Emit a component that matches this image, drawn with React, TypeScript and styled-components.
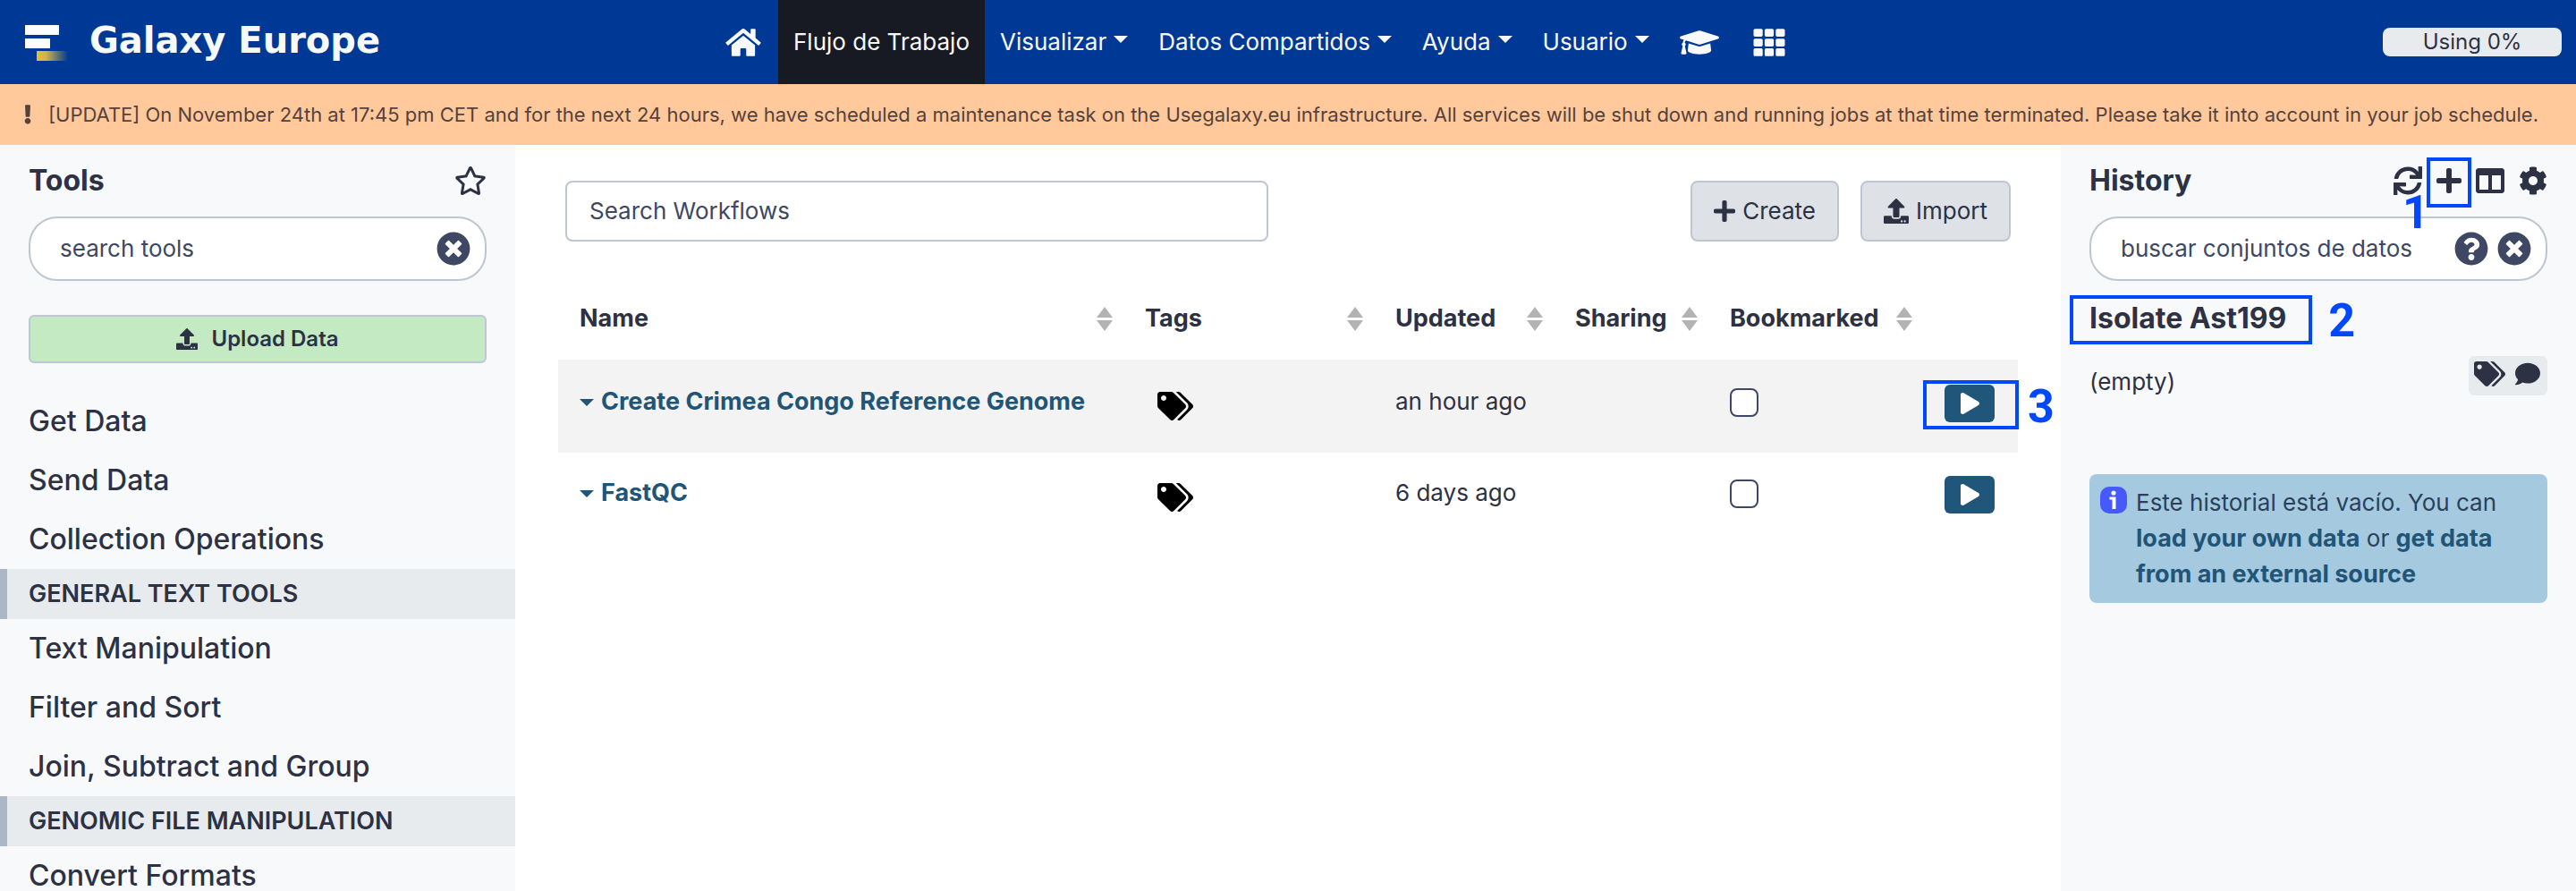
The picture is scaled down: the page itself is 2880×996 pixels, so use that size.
import React from 'react';
import styled, { createGlobalStyle, css } from 'styled-components';
import {
  FaCog,
  FaColumns,
  FaComment,
  FaExclamation,
  FaGraduationCap,
  FaHome,
  FaPlay,
  FaPlus,
  FaQuestionCircle,
  FaRegStar,
  FaSync,
  FaTags,
  FaTh,
  FaTimesCircle,
  FaUpload,
} from 'react-icons/fa';

const color = {
  masthead: '#003896',
  mastheadActive: '#181a23',
  light: '#f8f9fb',
  notice: '#ffc99b',
  noticeText: '#56423c',
  text: '#2c3143',
  muted: '#3e4763',
  border: '#bdc6d2',
  panel: '#f8f9fb',
  section: '#e8ebee',
  sectionBar: '#abb7c5',
  link: '#205578',
  callout: '#0048ff',
};

const GlobalStyle = createGlobalStyle`
  *, *::before, *::after { box-sizing: border-box; }
  body {
    margin: 0;
    background: #fff;
    color: ${color.text};
    font: 400 26px/42px Inter, "Liberation Sans", sans-serif;
  }
  button, input { font: inherit; color: inherit; }
  a { color: inherit; text-decoration: none; }
`;

const Shell = styled.div`
  display: flex;
  flex-direction: column;
  height: 100vh;
  overflow: hidden;
`;

const caret = css`
  content: '';
  display: inline-block;
  border: 8px solid transparent;
  border-top-color: currentColor;
  border-bottom: 0;
`;

/* Masthead */

const Masthead = styled.header`
  display: flex;
  align-items: stretch;
  flex: none;
  height: 94px;
  background: ${color.masthead};
  color: ${color.light};
`;

const Brand = styled.a`
  display: flex;
  align-items: center;
  gap: 22px;
  flex: 0 0 27.5%;
  padding: 0 0 4px 24px;
  font: 700 40px/48px "DejaVu Sans", sans-serif;

  svg {
    width: 54px;
    height: 48px;
    margin-top: 6px;
  }
`;

const Nav = styled.nav`
  display: flex;
  flex: 1;
`;

const NavLink = styled.a<{ $active?: boolean; $menu?: boolean }>`
  display: flex;
  align-items: center;
  padding: 0 17px;
  white-space: nowrap;
  background: ${(p) => (p.$active ? color.mastheadActive : 'transparent')};

  svg {
    width: 44px;
    height: 35px;
  }

  ${(p) =>
    p.$menu &&
    css`
      &::after {
        ${caret}
        margin: 0 0 6px 8px;
      }
    `}
`;

const Quota = styled.a`
  align-self: center;
  width: 200px;
  margin-right: 16px;
  border-radius: 8px;
  background: ${color.section};
  color: ${color.text};
  font-size: 24px;
  line-height: 32px;
  text-align: center;
`;

const Notice = styled.div`
  display: flex;
  align-items: center;
  gap: 19px;
  flex: none;
  min-height: 68px;
  padding: 0 27px;
  background: ${color.notice};
  color: ${color.noticeText};
  font-size: 22px;
  line-height: 32px;

  svg {
    flex: none;
    width: 8px;
    height: 22px;
  }
`;

/* Side panels */

const Columns = styled.div`
  display: grid;
  grid-template-columns: 20% minmax(0, 1fr) 20%;
  flex: 1;
  min-height: 0;
`;

const Panel = styled.aside`
  overflow: hidden;
  padding-top: 16px;
  background: ${color.panel};
`;

const PanelBody = styled.div`
  padding: 0 32px;
`;

const PanelHeader = styled.div`
  display: flex;
  align-items: center;
  justify-content: space-between;
  height: 48px;
  margin-bottom: 16px;
`;

const Title = styled.h2`
  margin: 0;
  font-size: 32px;
  line-height: 48px;
  font-weight: 700;
`;

const IconGroup = styled.div`
  display: flex;
  align-items: center;
  gap: 16px;
`;

const IconButton = styled.button<{ $size: number; $width?: number }>`
  position: relative;
  display: flex;
  flex: none;
  padding: 0;
  border: 0;
  background: none;
  cursor: pointer;

  svg {
    display: block;
    width: ${(p) => p.$width ?? p.$size}px;
    height: ${(p) => p.$size}px;
  }
`;

const SearchPill = styled.div`
  display: flex;
  align-items: center;
  gap: 10px;
  height: 72px;
  padding: 0 16px 0 33px;
  border: 2px solid ${color.border};
  border-radius: 32px;
  background: #fff;
  color: ${color.muted};
`;

const inputText = css`
  outline: none;
  color: ${color.muted};
  &::placeholder {
    color: ${color.muted};
    opacity: 1;
  }
`;

const PillInput = styled.input`
  flex: 1;
  min-width: 0;
  padding: 0;
  border: 0;
  background: none;
  ${inputText}
`;

const UploadButton = styled.button`
  display: flex;
  align-items: center;
  justify-content: center;
  gap: 15px;
  width: 100%;
  height: 54px;
  margin: 38px 0 32px;
  border: 2px solid ${color.border};
  border-radius: 6px;
  background: #c3eac3;
  font-size: 24px;
  font-weight: 600;

  svg {
    width: 24px;
    height: 24px;
  }
`;

const ToolSection = styled.a`
  display: block;
  padding: 0 32px;
  font-size: 32px;
  line-height: 66px;
  font-weight: 500;
  white-space: nowrap;
`;

const ToolHeading = styled.h3`
  margin: 0;
  padding-left: 24px;
  border-left: 8px solid ${color.sectionBar};
  background: ${color.section};
  font-size: 27px;
  line-height: 56px;
  font-weight: 600;
  text-transform: uppercase;
  white-space: nowrap;
`;

/* Workflow list */

const Main = styled.main`
  min-width: 0;
  padding: 40px 48px;
`;

const Toolbar = styled.div`
  display: flex;
  justify-content: space-between;
  gap: 24px;
  height: 68px;
  margin: 0 8px 40px;
`;

const WorkflowSearch = styled.input`
  flex: 0 1 calc(50% - 22px);
  min-width: 0;
  padding: 0 25px;
  border: 2px solid ${color.border};
  border-radius: 8px;
  background: #fff;
  ${inputText}
`;

const ActionGroup = styled.div`
  display: flex;
  gap: 24px;
`;

const ActionButton = styled.button<{ $iconWidth: number }>`
  display: flex;
  align-items: center;
  gap: 8px;
  padding: 0 24px;
  border: 2px solid ${color.border};
  border-radius: 8px;
  background: #dee1e6;
  white-space: nowrap;

  svg {
    width: ${(p) => p.$iconWidth}px;
    height: 28px;
  }
`;

const WorkflowTable = styled.table`
  width: 100%;
  table-layout: fixed;
  border-collapse: separate;
  border-spacing: 0;
`;

const HeadCell = styled.th<{ $width?: number }>`
  ${(p) => p.$width && `width: ${p.$width}px;`}
  height: 94px;
  padding: 0 12px 0 24px;
  border-bottom: 2px solid #f3f3f3;
  font-size: 27px;
  font-weight: 700;
  text-align: left;
`;

const HeadLabel = styled.div`
  display: flex;
  align-items: center;
  justify-content: space-between;

  svg {
    flex: none;
    width: 18px;
    height: 27px;
    fill: #b3b3b3;
  }
`;

const Row = styled.tr`
  height: 102px;
  &:nth-child(odd) {
    background: #f3f3f3;
  }
`;

const Cell = styled.td`
  padding: 24px 24px 0;
  vertical-align: top;
  white-space: nowrap;
`;

const WorkflowLink = styled.a`
  color: ${color.link};
  font-size: 27px;
  font-weight: 700;

  &::before {
    ${caret}
    margin-right: 8px;
    vertical-align: 4px;
  }
`;

const TagsButton = styled(IconButton)`
  margin: 10px 0 0 14px;
  color: #000;
`;

const Bookmark = styled.input`
  display: block;
  appearance: none;
  width: 32px;
  height: 32px;
  margin: 6px 0 0;
  border: 2px solid ${color.muted};
  border-radius: 8px;
  background: #fff;
`;

const RunButton = styled.button`
  position: relative;
  display: flex;
  align-items: center;
  justify-content: center;
  width: 56px;
  height: 42px;
  margin-top: 2px;
  padding: 0;
  border: 0;
  border-radius: 6px;
  background: #20567a;
  color: #fff;

  svg {
    width: 21px;
    height: 24px;
  }
`;

/* History */

const HistoryName = styled.h3`
  position: relative;
  width: max-content;
  margin: 16px 0;
  font-size: 32px;
  line-height: 52px;
  font-weight: 700;
`;

const HistoryRow = styled.div`
  display: flex;
  align-items: flex-start;
  justify-content: space-between;
  margin-bottom: 74px;
  line-height: 58px;
`;

const HistoryTools = styled.div`
  display: flex;
  gap: 11px;
  padding: 6px 8px 10px 6px;
  border-radius: 6px;
  background: ${color.section};
`;

const InfoBox = styled.div`
  display: flex;
  gap: 10px;
  padding: 12px;
  border-radius: 8px;
  background: #a5c9df;
  color: #2b4059;
  line-height: 40px;

  svg {
    flex: none;
    width: 30px;
    height: 30px;
    margin-top: 2px;
  }

  p {
    margin: 0;
  }

  a {
    color: ${color.link};
    font-size: 27px;
    font-weight: 700;
  }
`;

/* Numbered callouts drawn over the page */

const CalloutFrame = styled.span<{ $inset: string }>`
  position: absolute;
  inset: ${(p) => p.$inset};
  border: 4px solid ${color.callout};
  pointer-events: none;
`;

const CalloutNumber = styled.span<{ $left: string; $top: string }>`
  position: absolute;
  left: ${(p) => p.$left};
  top: ${(p) => p.$top};
  color: ${color.callout};
  font: 700 52px/52px Roboto, sans-serif;
  pointer-events: none;
`;

const Logo = () => (
  <svg viewBox="0 0 54 48" aria-hidden="true">
    <defs>
      <linearGradient id="tail" x1="0" x2="1">
        <stop offset="0" stopColor="#dfc03a" />
        <stop offset="0.3" stopColor="#cdb648" />
        <stop offset="1" stopColor="#cdb648" stopOpacity="0" />
      </linearGradient>
    </defs>
    <rect x="4" y="4" width="38" height="11" fill="#fff" />
    <rect x="4" y="19" width="28" height="11" fill="#fff" />
    <rect x="17" y="33" width="35" height="11" fill="url(#tail)" />
  </svg>
);

const SortIcon = () => (
  <svg viewBox="0 0 18 27" aria-hidden="true">
    <path d="M9 0l9 12H0zM9 27L0 15h18z" />
  </svg>
);

const InfoIcon = () => (
  <svg viewBox="0 0 30 30" aria-hidden="true">
    <rect width="30" height="30" rx="10" fill="#4659ff" />
    <circle cx="15" cy="7" r="2.6" fill="#fff" />
    <path d="M10.500 11.500h7V25h-4V14.500h-3z" fill="#fff" />
  </svg>
);

const toolGroups = [
  { heading: '', tools: ['Get Data', 'Send Data', 'Collection Operations'] },
  {
    heading: 'General Text Tools',
    tools: ['Text Manipulation', 'Filter and Sort', 'Join, Subtract and Group'],
  },
  { heading: 'Genomic File Manipulation', tools: ['Convert Formats'] },
];

const columns: { label: string; width?: number }[] = [
  { label: 'Name' },
  { label: 'Tags', width: 280 },
  { label: 'Updated', width: 201 },
  { label: 'Sharing', width: 173 },
  { label: 'Bookmarked', width: 240 },
];

const workflows = [
  { name: 'Create Crimea Congo Reference Genome', updated: 'an hour ago', callout: true },
  { name: 'FastQC', updated: '6 days ago', callout: false },
];

export default function App() {
  return (
    <Shell>
      <GlobalStyle />
      <Masthead>
        <Brand href="#">
          <Logo />
          Galaxy Europe
        </Brand>
        <Nav>
          <NavLink href="#" aria-label="Home">
            <FaHome />
          </NavLink>
          <NavLink href="#" $active>
            Flujo de Trabajo
          </NavLink>
          {['Visualizar', 'Datos Compartidos', 'Ayuda', 'Usuario'].map((label) => (
            <NavLink key={label} href="#" $menu>
              {label}
            </NavLink>
          ))}
          <NavLink href="#" aria-label="Training">
            <FaGraduationCap />
          </NavLink>
          <NavLink href="#" aria-label="Apps">
            <FaTh />
          </NavLink>
        </Nav>
        <Quota href="#">Using 0%</Quota>
      </Masthead>

      <Notice>
        <FaExclamation />
        <span>
          [UPDATE] On November 24th at 17:45 pm CET and for the next 24 hours, we have scheduled a
          maintenance task on the Usegalaxy.eu infrastructure. All services will be shut down and
          running jobs at that time terminated. Please take it into account in your job schedule.
        </span>
      </Notice>

      <Columns>
        <Panel>
          <PanelBody>
            <PanelHeader>
              <Title>Tools</Title>
              <IconButton $size={32} $width={36} aria-label="Favorites">
                <FaRegStar />
              </IconButton>
            </PanelHeader>
            <SearchPill>
              <PillInput placeholder="search tools" aria-label="search tools" />
              <IconButton $size={38} aria-label="Clear search">
                <FaTimesCircle />
              </IconButton>
            </SearchPill>
            <UploadButton>
              <FaUpload />
              Upload Data
            </UploadButton>
          </PanelBody>
          {toolGroups.map((group) => (
            <React.Fragment key={group.heading}>
              {group.heading && <ToolHeading>{group.heading}</ToolHeading>}
              {group.tools.map((tool) => (
                <ToolSection key={tool} href="#">
                  {tool}
                </ToolSection>
              ))}
            </React.Fragment>
          ))}
        </Panel>

        <Main>
          <Toolbar>
            <WorkflowSearch placeholder="Search Workflows" aria-label="Search Workflows" />
            <ActionGroup>
              <ActionButton $iconWidth={24}>
                <FaPlus />
                Create
              </ActionButton>
              <ActionButton $iconWidth={28}>
                <FaUpload />
                Import
              </ActionButton>
            </ActionGroup>
          </Toolbar>
          <WorkflowTable>
            <thead>
              <tr>
                {columns.map((column) => (
                  <HeadCell key={column.label} $width={column.width}>
                    <HeadLabel>
                      {column.label}
                      <SortIcon />
                    </HeadLabel>
                  </HeadCell>
                ))}
                <HeadCell $width={106} aria-label="Run" />
              </tr>
            </thead>
            <tbody>
              {workflows.map((workflow) => (
                <Row key={workflow.name}>
                  <Cell>
                    <WorkflowLink href="#">{workflow.name}</WorkflowLink>
                  </Cell>
                  <Cell>
                    <TagsButton $size={32} $width={40} aria-label="Edit tags">
                      <FaTags />
                    </TagsButton>
                  </Cell>
                  <Cell>{workflow.updated}</Cell>
                  <Cell />
                  <Cell>
                    <Bookmark type="checkbox" aria-label={`Bookmark ${workflow.name}`} />
                  </Cell>
                  <Cell>
                    <RunButton aria-label={`Run ${workflow.name}`}>
                      <FaPlay />
                      {workflow.callout && (
                        <>
                          <CalloutFrame $inset="-5px -27px -8px -24px" />
                          <CalloutNumber $left="93px" $top="-1px">
                            3
                          </CalloutNumber>
                        </>
                      )}
                    </RunButton>
                  </Cell>
                </Row>
              ))}
            </tbody>
          </WorkflowTable>
        </Main>

        <Panel>
          <PanelBody>
            <PanelHeader>
              <Title>History</Title>
              <IconGroup>
                <IconButton $size={32} aria-label="Refresh history">
                  <FaSync />
                </IconButton>
                <IconButton $size={32} $width={28} aria-label="Create new history">
                  <FaPlus />
                  <CalloutFrame $inset="-10px -11px -14px" />
                  <CalloutNumber $left="-38px" $top="26px">
                    1
                  </CalloutNumber>
                </IconButton>
                <IconButton $size={32} aria-label="View all histories">
                  <FaColumns />
                </IconButton>
                <IconButton $size={32} aria-label="History options">
                  <FaCog />
                </IconButton>
              </IconGroup>
            </PanelHeader>
            <SearchPill>
              <PillInput
                placeholder="buscar conjuntos de datos"
                aria-label="buscar conjuntos de datos"
              />
              <IconButton $size={38} aria-label="Search help">
                <FaQuestionCircle />
              </IconButton>
              <IconButton $size={38} aria-label="Clear search">
                <FaTimesCircle />
              </IconButton>
            </SearchPill>
            <HistoryName>
              Isolate Ast199
              <CalloutFrame $inset="0 -29px -3px -22px" />
              <CalloutNumber $left="calc(100% + 47px)" $top="3px">
                2
              </CalloutNumber>
            </HistoryName>
            <HistoryRow>
              (empty)
              <HistoryTools>
                <IconButton $size={28} $width={35} aria-label="Edit history tags">
                  <FaTags />
                </IconButton>
                <IconButton $size={28} aria-label="Edit history annotation">
                  <FaComment />
                </IconButton>
              </HistoryTools>
            </HistoryRow>
            <InfoBox>
              <InfoIcon />
              <p>
                Este historial está vacío. You can <a href="#">load your own data</a> or{' '}
                <a href="#">get data from an external source</a>
              </p>
            </InfoBox>
          </PanelBody>
        </Panel>
      </Columns>
    </Shell>
  );
}
